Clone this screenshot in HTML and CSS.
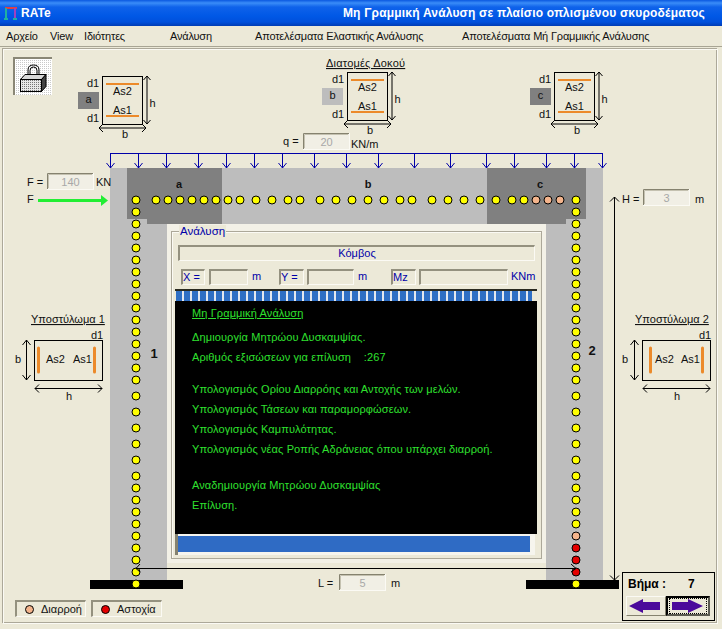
FILE: index.html
```html
<!DOCTYPE html>
<html lang="el">
<head>
<meta charset="utf-8">
<title>RATe</title>
<link rel="stylesheet" href="styles.css">
</head>
<body>
<div class="window">
  <header class="titlebar">
    <svg class="appicon" width="16" height="16" viewBox="0 0 16 16"><path d="M2 3H14" class="ic-r"/><path d="M3 3V15" class="ic-t"/><path d="M12 3V15" class="ic-p"/><path d="M1 14H5M10 14H14" class="ic-t"/></svg>
    <span class="appname">RATe</span>
    <span class="apptitle">Μη Γραμμική Ανάλυση σε πλαίσιο οπλισμένου σκυροδέματος</span>
  </header>
  <nav class="menubar">
    <span>Αρχείο</span><span>View</span><span>Ιδιότητες</span><span>Ανάλυση</span><span>Αποτελέσματα Ελαστικής Ανάλυσης</span><span>Αποτελέσματα Μή Γραμμικής Ανάλυσης</span>
  </nav>
  <main class="canvas">
    <svg class="diagram" width="722" height="582" viewBox="0 47 722 582">
      <defs>
        <pattern id="stipple" width="2" height="2" patternUnits="userSpaceOnUse"><rect width="2" height="2" fill="#fff"/><rect width="1" height="1" fill="#c9c9c9"/></pattern>
        <pattern id="hatch" width="2" height="2" patternUnits="userSpaceOnUse"><rect width="2" height="2" fill="#e8e8e8"/><rect width="1" height="1" fill="#777"/></pattern>
        <g id="field"><rect width="47" height="17" class="fieldbg"/><path d="M0.5 16V0.5H46" class="fielddark"/><path d="M1.5 15V1.5H45" class="fielddark2"/><path d="M0 16.5H47M46.5 0V17" class="fieldlight"/></g>
        <g id="sec">
          <rect x="0.5" y="0.5" width="40" height="48" class="secbox"/>
          <path d="M4 8H37M4 40H37" class="rebar"/>
          <path d="M45 0V48M41.500 4L45 0L48.500 4M41.500 44L45 48L48.500 44M-3 52H44M1 48L-3 52L1 56M40 48L44 52L40 56" class="ink"/>
        </g>
        <path id="la" d="M0 153V168M-4 163L0 168L4 163" class="load"/>
      </defs>

      <rect x="2.500" y="48.500" width="714" height="574" class="frame-d"/>
      <rect x="3.500" y="49.500" width="714" height="574" class="frame-l"/>

      <!-- lock button -->
      <rect x="13" y="57" width="39" height="38" fill="url(#stipple)"/>
      <path d="M14 95V58H52" class="bevel"/>
      <path d="M28 75V70Q28 65 33.500 65Q39 65 39 70V75" class="shackle"/>
      <path d="M30 75V70.500Q30 67 33.500 67Q37 67 37 70.500V75" class="shackle-in"/>
      <path d="M20.500 79.500L25 74.500H46L41.500 79.500Z" fill="#d8d8d8" stroke="#000"/>
      <path d="M41.500 79.500L46 74.500V86.500L41.500 91.500Z" fill="#444" stroke="#000"/>
      <rect x="20.500" y="79.500" width="21" height="12" fill="url(#hatch)" stroke="#000"/>

      <!-- sections of the beam -->
      <text x="326" y="67" class="t ul wide">Διατομές Δοκού</text>
      <g transform="translate(102 76)">
        <use href="#sec"/>
        <text x="-15" y="11" class="t12">d1</text><text x="-15" y="46" class="t12">d1</text>
        <text x="20.500" y="19" class="t m">As2</text><text x="20.500" y="38" class="t m">As1</text>
        <text x="47.500" y="31" class="t12">h</text><text x="20" y="62" class="t12">b</text>
      </g>
      <g transform="translate(347 72)">
        <use href="#sec"/>
        <text x="-15" y="11" class="t12">d1</text><text x="-15" y="46" class="t12">d1</text>
        <text x="20.500" y="19" class="t m">As2</text><text x="20.500" y="38" class="t m">As1</text>
        <text x="47.500" y="31" class="t12">h</text><text x="20" y="62" class="t12">b</text>
      </g>
      <g transform="translate(554 72)">
        <use href="#sec"/>
        <text x="-15" y="11" class="t12">d1</text><text x="-15" y="46" class="t12">d1</text>
        <text x="20.500" y="19" class="t m">As2</text><text x="20.500" y="38" class="t m">As1</text>
        <text x="47.500" y="31" class="t12">h</text><text x="20" y="62" class="t12">b</text>
      </g>
      <rect x="78" y="92" width="21" height="17" class="dark"/><text x="88.500" y="103" class="t m">a</text>
      <rect x="322" y="88" width="21" height="17" class="mid"/><text x="332.500" y="99" class="t m">b</text>
      <rect x="530" y="88" width="21" height="17" class="dark"/><text x="540.500" y="99" class="t m">c</text>

      <!-- distributed load -->
      <text x="283" y="145" class="t12">q =</text>
      <use href="#field" x="303" y="133"/><text x="326.500" y="146" class="t m g">20</text>
      <text x="351" y="148" class="t12">KN/m</text>
      <path d="M110 153.500H603" class="load"/>
      <use href="#la" x="110.500"/><use href="#la" x="138.500"/><use href="#la" x="166.500"/><use href="#la" x="198.500"/><use href="#la" x="226.500"/><use href="#la" x="254.500"/><use href="#la" x="282.500"/><use href="#la" x="314.500"/><use href="#la" x="346.500"/><use href="#la" x="378.500"/><use href="#la" x="414.500"/><use href="#la" x="450.500"/><use href="#la" x="486.500"/><use href="#la" x="514.500"/><use href="#la" x="546.500"/><use href="#la" x="574.500"/><use href="#la" x="602.500"/>

      <!-- frame -->
      <rect x="110" y="168" width="493" height="56" class="mid"/>
      <rect x="110" y="168" width="57" height="412" class="mid"/>
      <rect x="546" y="168" width="57" height="412" class="mid"/>
      <path d="M127 168H222V224H147V219H127Z" class="dark"/>
      <path d="M487 168H586V219H566V224H487Z" class="dark"/>
      <text x="179" y="188" class="tb m">a</text>
      <text x="368" y="188" class="tb m">b</text>
      <text x="540" y="188" class="tb m">c</text>
      <text x="154" y="358" class="tb13 m">1</text>
      <text x="592" y="355" class="tb13 m">2</text>
      <rect x="90" y="580" width="93" height="9"/>
      <rect x="526" y="580" width="93" height="9"/>

      <!-- force -->
      <text x="27" y="186" class="t12">F =</text>
      <use href="#field" x="47" y="173"/><text x="70.500" y="186" class="t m g">140</text>
      <text x="96" y="186" class="t12">KN</text>
      <text x="27" y="203" class="t12">F</text>
      <path d="M38 200.500H103" class="force"/><path d="M101 195L108 200.500L101 206Z" class="forcehead"/>

      <!-- beam nodes -->
      <g class="dots">
        <circle cx="156" cy="200"/><circle cx="168" cy="200"/><circle cx="180" cy="200"/><circle cx="192" cy="200"/><circle cx="204" cy="200"/><circle cx="216" cy="200"/><circle cx="228" cy="200"/><circle cx="240" cy="200"/><circle cx="256" cy="200"/><circle cx="272" cy="200"/><circle cx="288" cy="200"/><circle cx="300" cy="200"/><circle cx="320" cy="200"/><circle cx="336" cy="200"/><circle cx="352" cy="200"/><circle cx="368" cy="200"/><circle cx="384" cy="200"/><circle cx="400" cy="200"/><circle cx="412" cy="200"/><circle cx="432" cy="200"/><circle cx="448" cy="200"/><circle cx="464" cy="200"/><circle cx="480" cy="200"/><circle cx="496" cy="200"/><circle cx="512" cy="200"/><circle cx="524" cy="200"/><circle cx="536" cy="200" class="leak"/><circle cx="548" cy="200" class="leak"/><circle cx="560" cy="200" class="leak"/>
      </g>
      <!-- column 1 nodes -->
      <g class="dots">
        <circle cx="136" cy="200"/><circle cx="136" cy="212"/><circle cx="136" cy="224"/><circle cx="136" cy="236"/><circle cx="136" cy="248"/><circle cx="136" cy="260"/><circle cx="136" cy="272"/><circle cx="136" cy="284"/><circle cx="136" cy="296"/><circle cx="136" cy="308"/><circle cx="136" cy="320"/><circle cx="136" cy="332"/><circle cx="136" cy="344"/><circle cx="136" cy="356"/><circle cx="136" cy="368"/><circle cx="136" cy="380"/><circle cx="136" cy="396"/><circle cx="136" cy="412"/><circle cx="136" cy="428"/><circle cx="136" cy="444"/><circle cx="136" cy="460"/><circle cx="136" cy="476"/><circle cx="136" cy="488"/><circle cx="136" cy="500"/><circle cx="136" cy="512"/><circle cx="136" cy="524"/><circle cx="136" cy="536"/><circle cx="136" cy="548"/><circle cx="136" cy="560"/><circle cx="136" cy="572"/><circle cx="136" cy="584"/>
      </g>
      <!-- column 2 nodes -->
      <g class="dots">
        <circle cx="576" cy="200"/><circle cx="576" cy="212"/><circle cx="576" cy="224"/><circle cx="576" cy="236"/><circle cx="576" cy="248"/><circle cx="576" cy="260"/><circle cx="576" cy="272"/><circle cx="576" cy="284"/><circle cx="576" cy="296"/><circle cx="576" cy="308"/><circle cx="576" cy="320"/><circle cx="576" cy="332"/><circle cx="576" cy="344"/><circle cx="576" cy="356"/><circle cx="576" cy="368"/><circle cx="576" cy="380"/><circle cx="576" cy="396"/><circle cx="576" cy="412"/><circle cx="576" cy="428"/><circle cx="576" cy="444"/><circle cx="576" cy="460"/><circle cx="576" cy="476"/><circle cx="576" cy="488"/><circle cx="576" cy="500"/><circle cx="576" cy="512"/><circle cx="576" cy="524"/><circle cx="576" cy="536" class="leak"/><circle cx="576" cy="548" class="fail"/><circle cx="576" cy="560" class="fail"/><circle cx="576" cy="572" class="fail"/><circle cx="576" cy="584"/>
      </g>

      <!-- dimensions -->
      <path d="M136 568.500H576M140 564L136 568.500L140 572M571 564L576 568.500L571 572" class="ink"/>
      <text x="318" y="587" class="t12">L =</text>
      <use href="#field" x="339" y="574"/><text x="362.500" y="587" class="t m g">5</text>
      <text x="391" y="587" class="t12">m</text>
      <path d="M614.500 197V580M610 201.500L614.500 197L619 201.500M610 575.500L614.500 580L619 575.500" class="ink"/>
      <text x="622" y="203" class="t12">H =</text>
      <use href="#field" x="643" y="189"/><text x="666.500" y="202" class="t m g">3</text>
      <text x="695" y="203" class="t12">m</text>

      <!-- column 1 section -->
      <text x="31" y="323" class="t12 ul">Υποστύλωμα 1</text>
      <text x="91" y="339" class="t12">d1</text>
      <rect x="34.500" y="340.500" width="68" height="40" class="secbox"/>
      <path d="M38.500 348V372M94.500 348V372" class="rebar round"/>
      <text x="46" y="363" class="t">As2</text><text x="73" y="363" class="t">As1</text>
      <text x="15" y="363" class="t12">b</text>
      <path d="M26.500 340V380M22.500 345L26.500 340L30.500 345M22.500 375L26.500 380L30.500 375M35 388.500H102M39 384.500L35 388.500L39 392.500M98 384.500L102 388.500L98 392.500" class="ink"/>
      <text x="66" y="400" class="t12">h</text>

      <!-- column 2 section -->
      <text x="635" y="323" class="t12 ul">Υποστύλωμα 2</text>
      <text x="699" y="339" class="t12">d1</text>
      <rect x="642.500" y="340.500" width="68" height="40" class="secbox"/>
      <path d="M650.500 348V372M702.500 348V372" class="rebar round"/>
      <text x="655" y="363" class="t">As2</text><text x="681" y="363" class="t">As1</text>
      <text x="622" y="363" class="t12">b</text>
      <path d="M634.500 340V380M630.500 345L634.500 340L638.500 345M630.500 375L634.500 380L638.500 375M643 388.500H710M647 384.500L643 388.500L647 392.500M706 384.500L710 388.500L706 392.500" class="ink"/>
      <text x="674" y="400" class="t12">h</text>
    </svg>

    <section class="analysis">
      <fieldset class="group">
        <legend class="grouptitle">Ανάλυση</legend>
        <div class="node sunken">Κόμβος</div>
        <div class="coords">
          <span class="sunken box-x">X =</span><span class="sunken in-x"></span><span class="unit unit-x">m</span>
          <span class="sunken box-y">Y =</span><span class="sunken in-y"></span><span class="unit unit-y">m</span>
          <span class="sunken box-y">Mz</span><span class="sunken in-m"></span><span class="unit unit-m">KNm</span>
        </div>
        <div class="console">
          <div class="blocks"></div>
          <p class="line head">Μη Γραμμική Ανάλυση</p>
          <p class="line gap4">Δημιουργία Μητρώου Δυσκαμψίας.</p>
          <p class="line">Αριθμός εξισώσεων για επίλυση    :267</p>
          <p class="line gap12">Υπολογισμός Ορίου Διαρρόης και Αντοχής των μελών.</p>
          <p class="line">Υπολογισμός Τάσεων και παραμορφώσεων.</p>
          <p class="line">Υπολογισμός Καμπυλότητας.</p>
          <p class="line">Υπολογισμός νέας Ροπής Αδράνειας όπου υπάρχει διαρροή.</p>
          <p class="line gap16">Αναδημιουργία Μητρώου Δυσκαμψίας</p>
          <p class="line">Επίλυση.</p>
        </div>
        <div class="barframe"><div class="barfill"></div></div>
      </fieldset>
    </section>

    <div class="legend">
      <div class="chip sunken"><i class="swatch leakc"></i>Διαρροή</div>
      <div class="chip sunken"><i class="swatch failc"></i>Αστοχία</div>
    </div>

    <div class="step">
      <div class="stepinfo"><span>Βήμα :</span><span>7</span></div>
      <div class="stepbtns">
        <button class="nav" type="button" aria-label="previous"><svg width="34" height="14" viewBox="0 0 34 14"><path d="M0 7L14 0V3H31V11H14V14Z" class="navarrow"/></svg></button>
        <button class="nav active" type="button" aria-label="next"><span class="focus"><svg width="32" height="14" viewBox="0 0 32 14"><path d="M31 7L16 0V3H0V11H16V14Z" class="navarrow"/></svg></span></button>
      </div>
    </div>
  </main>
</div>
</body>
</html>
```
FILE: styles.css
```css
* { box-sizing: border-box; }
html, body { margin: 0; padding: 0; }
body { background: #ece9d8; font-family: "Liberation Sans", Arial, sans-serif; font-size: 11px; color: #000; overflow: hidden; }

.window { width: 722px; height: 629px; display: flex; flex-direction: column; background: #ece9d8; }

.titlebar {
  height: 26px; display: flex; align-items: center; padding: 0 17px 0 3px;
  color: #fff; font-weight: bold;
  background: linear-gradient(#0a58e0 0, #3a8cf8 3px, #0f62ea 7px, #0058e6 16px, #0050dc 22px, #003cb4 26px);
}
.appicon { flex: none; fill: none; stroke-width: 2; }
.ic-r { stroke: #e04040; }
.ic-t { stroke: #20b0a0; }
.ic-p { stroke: #a040c0; }
.appname { margin-left: 2px; font-size: 12px; }
.apptitle { margin-left: auto; font-size: 12px; letter-spacing: 0.2px; }

.menubar {
  height: 21px; display: grid; grid-template-columns: 44px 34px 86px 85px 207px auto;
  align-items: center; padding-left: 6px; border-bottom: 1px solid #a8a594; color: #111; white-space: nowrap; letter-spacing: -0.18px;
}

.canvas { position: relative; flex: 1; }
.diagram { position: absolute; left: 0; top: 0; display: block; }
.diagram text { font-family: "Liberation Sans", Arial, sans-serif; fill: #111; }

.t { font-size: 11px; }
.t12 { font-size: 11px; }
.wide { letter-spacing: 0.2px; }
.tb { font-size: 11px; font-weight: bold; }
.tb13 { font-size: 13px; font-weight: bold; }
.m { text-anchor: middle; }
.ul { text-decoration: underline; }
.diagram .g { fill: #a8a8a8; }

.frame-d { fill: none; stroke: #aca899; }
.frame-l { fill: none; stroke: #fbfaf4; }
.bevel { fill: none; stroke: #8a8776; stroke-width: 2; }
.shackle { fill: none; stroke: #000; stroke-width: 1; }
.shackle-in { fill: none; stroke: #000; stroke-width: 1; }

.fieldbg { fill: #f1efe5; }
.fielddark { fill: none; stroke: #85826f; }
.fielddark2 { fill: none; stroke: #c4c1b0; }
.fieldlight { fill: none; stroke: #fbfaf4; }

.secbox { fill: #ece9d8; stroke: #000; }
.rebar { stroke: #ec8a2a; stroke-width: 2; fill: none; }
.round { stroke-width: 3; stroke-linecap: round; }
.ink { fill: none; stroke: #000; stroke-width: 1; }
.load { fill: none; stroke: #0000a8; stroke-width: 1; }
.dark { fill: #808080; }
.mid { fill: #bdbdbd; }
.force { stroke: #22ee33; stroke-width: 3; fill: none; }
.forcehead { fill: #22ee33; }

.dots circle { r: 4px; fill: #ffff00; stroke: #000; stroke-width: 1; }
.dots circle.leak { fill: #f4b48c; }
.dots circle.fail { fill: #e40000; }

.analysis { position: absolute; left: 167px; top: 177px; width: 379px; height: 339px; padding: 1px 4px 4px; background: #f3f1e7; }
.group { margin: 0; padding: 0; width: 371px; height: 334px; border: 1px solid #aca899; background: #ece9d8; box-shadow: inset 1px 1px 0 #fbfaf4; }
.grouptitle { margin-left: 7px; padding: 0 1px; color: #0000a8; font-size: 11.500px; line-height: 13px; background: #ece9d8; }

.sunken { border-style: solid; border-width: 2px 1px 1px 2px; border-color: #94917f #fbfaf4 #fbfaf4 #94917f; }
.node { margin: 7px 0 0 6px; width: 357px; height: 16px; color: #0000a8; text-align: center; line-height: 13px; }
.coords { display: flex; align-items: stretch; height: 16px; margin-top: 8px; padding-left: 9px; color: #0000a8; line-height: 13px; white-space: nowrap; }
.coords > * { flex: none; }
.box-x { width: 24px; }
.box-y { width: 25px; }
.in-x { width: 39px; margin-left: 4px; }
.in-y { width: 47px; margin-left: 3px; }
.in-m { width: 89px; margin-left: 3px; }
.unit { margin-left: 4px; line-height: 15px; }
.unit-x { width: 27px; }
.unit-y { width: 33px; }
.unit-m { margin-left: 3px; }

.console { margin: 4px 0 0 3px; width: 362px; height: 245px; border-top: 2px solid #2a2a20; background: #000; color: #2fe02f; }
.blocks { height: 10px; margin-top: 0; background: repeating-linear-gradient(90deg, #2f6fc4 0 6px, #e4e8ef 6px 8px) 1px 0 / 356px 100% no-repeat #ece9d8; }
.line { margin: 0; padding-left: 17px; height: 20px; line-height: 20px; white-space: pre; letter-spacing: 0.11px; }
.head { margin-top: 2px; text-decoration: underline; }
.gap4 { margin-top: 4px; }
.gap12 { margin-top: 12px; }
.gap16 { margin-top: 16px; }

.barframe { margin-left: 3px; width: 360px; height: 21px; padding: 2px 5px 3px 0; border-left: 3px solid #85826f; background: #f6f5ee; }
.barfill { height: 16px; background: #2f6bc4; }

.legend { position: absolute; left: 15px; top: 553px; display: flex; gap: 5px; }
.chip { width: 71px; height: 17px; display: flex; align-items: center; padding-left: 8px; gap: 7px; line-height: 13px; color: #111; white-space: nowrap; }
.swatch { width: 9px; height: 9px; border-radius: 50%; border: 1px solid #000; flex: none; }
.leakc { background: #f4b48c; }
.failc { background: #e40000; }

.step { position: absolute; left: 622px; top: 525px; width: 93px; height: 49px; border: 1px solid #000; padding: 4px 3px; }
.stepinfo { display: flex; height: 15px; padding-left: 2px; font-size: 12px; font-weight: bold; line-height: 15px; }
.stepinfo span:first-child { width: 60px; }
.stepbtns { display: flex; margin-top: 4px; }
.nav { width: 40px; height: 20px; padding: 0; display: flex; align-items: center; justify-content: center; background: #ece9d8; border-style: solid; border-width: 1px; border-color: #fbfaf4 #85826f #85826f #fbfaf4; }
.nav.active { width: 44px; border: 2px solid; border-color: #000 #5a5a50 #5a5a50 #000; }
.focus { display: flex; align-items: center; justify-content: center; width: 38px; height: 16px; border: 1px dotted #000; }
.navarrow { fill: #4b0a9b; }
```
